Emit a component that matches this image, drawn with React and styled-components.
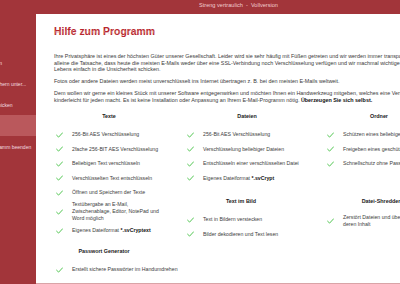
import styled, { createGlobalStyle } from "styled-components";

const GlobalStyle = createGlobalStyle`
  html, body {
    margin: 0;
    padding: 0;
    background-color: #a2353a;
    overflow: hidden;
  }
  body {
    font-family: "Liberation Sans", Arial, sans-serif;
  }
`;

const Page = styled.div`
  width: 400px;
  height: 284px;
  overflow: hidden;
  display: flex;
  flex-direction: column;
`;

const TopBar = styled.div`
  height: 14px;
  flex-shrink: 0;
  padding-left: 199px;
  font-size: 5.6px;
  line-height: 11px;
  color: #f1cdd0;
  white-space: nowrap;
`;

const Main = styled.div`
  display: flex;
  flex: 1;
  min-height: 0;
`;

const Sidebar = styled.nav`
  width: 36px;
  flex-shrink: 0;
  overflow: hidden;
  padding-top: 38px;
  box-sizing: border-box;
`;

const MenuItem = styled.div`
  height: 21px;
  display: flex;
  align-items: center;
  font-size: 5px;
  color: #f4dfe0;
  white-space: nowrap;
  background-color: ${(p) => (p.$active ? "#ba585c" : "transparent")};
`;

const MenuLabel = styled.span`
  margin-left: -13px;
`;

const Panel = styled.main`
  width: 540px;
  flex-shrink: 0;
  background-color: #ffffff;
  border-bottom: 1px solid #d9a4a7;
  padding: 12px 0 0 18px;
  box-sizing: border-box;
  overflow: hidden;
`;

const TitleBlock = styled.div`
  display: flex;
  flex-direction: column;
  align-items: flex-start;
  margin-bottom: 9px;
`;

const Title = styled.h1`
  margin: 0;
  font-size: 10.4px;
  line-height: 11px;
  font-weight: bold;
  color: #b8262d;
`;

const TitleMirror = styled.div`
  font-size: 10.4px;
  line-height: 11px;
  font-weight: bold;
  color: #d98a8e;
  transform: scaleY(-0.7);
  transform-origin: top;
  margin-top: -1px;
  height: 8px;
  -webkit-mask-image: linear-gradient(to bottom, transparent 20%, rgba(0, 0, 0, 0.8) 100%);
  mask-image: linear-gradient(to bottom, transparent 20%, rgba(0, 0, 0, 0.8) 100%);
`;

const Paragraph = styled.p`
  margin: 0 0 5.5px 0;
  font-size: 5.4px;
  line-height: 6.6px;
  color: #3a3a3a;
  white-space: nowrap;

  b {
    color: #111;
  }
`;

const Features = styled.div`
  display: grid;
  grid-template-columns: 132px 140px 140px;
  margin-top: 8px;
`;

const Column = styled.div`
  display: flex;
  flex-direction: column;
  gap: 10px;
`;

const Section = styled.div`
  display: flex;
  flex-direction: column;
  min-height: ${(p) => p.$minHeight || 0}px;
`;

const Heading = styled.div`
  width: ${(p) => p.$width || 110}px;
  height: 8px;
  line-height: 8px;
  text-align: center;
  font-size: 5.4px;
  font-weight: bold;
  color: #1a1a1a;
  white-space: nowrap;
  margin-bottom: 9px;
`;

const List = styled.div`
  display: flex;
  flex-direction: column;
  gap: 2.5px;
`;

const Item = styled.div`
  display: flex;
  align-items: center;
  gap: 9px;
  min-height: 12px;
  padding-left: ${(p) => p.$indent ?? 2}px;
  font-size: 5.2px;
  line-height: 7px;
  color: #3d3d3d;
  white-space: nowrap;

  b {
    color: #111;
  }
`;

const CheckMark = styled.svg`
  width: 7px;
  height: 6px;
  flex-shrink: 0;
`;

const Check = () => (
  <CheckMark viewBox="0 0 7 6">
    <path d="M0.6 3.2 L2.6 5.1 L6.6 0.8" fill="none" stroke="#3fbf3f" strokeWidth="0.9" strokeLinecap="round" strokeLinejoin="round" />
  </CheckMark>
);

const Feature = ({ children, indent }) => (
  <Item $indent={indent}>
    <Check />
    <span>{children}</span>
  </Item>
);

const menu = ["Öffnen", "Speichern unter...", "Abschicken", "Hilfe", "Programm beenden"];

export default function App() {
  return (
    <>
      <GlobalStyle />
      <Page>
        <TopBar>Streng vertraulich &nbsp;-&nbsp; Vollversion</TopBar>
        <Main>
          <Sidebar>
            {menu.map((label) => (
              <MenuItem key={label} $active={label === "Hilfe"}>
                <MenuLabel>{label}</MenuLabel>
              </MenuItem>
            ))}
          </Sidebar>
          <Panel>
            <TitleBlock>
              <Title>Hilfe zum Programm</Title>
              <TitleMirror aria-hidden="true">Hilfe zum Programm</TitleMirror>
            </TitleBlock>

            <Paragraph>
              Ihre Privatsphäre ist eines der höchsten Güter unserer Gesellschaft. Leider wird sie sehr häufig mit Füßen getreten und wir werden immer transparenter. Schon
              <br />
              alleine die Tatsache, dass heute die meisten E-Mails weder über eine SSL-Verbindung noch Verschlüsselung verfügen und wir machmal wichtige Daten unseres
              <br />
              Lebens einfach in die Unsicherheit schicken.
            </Paragraph>
            <Paragraph>
              Fotos oder andere Dateien werden meist unverschlüsselt ins Internet übertragen z. B. bei den meisten E-Mails weltweit.
            </Paragraph>
            <Paragraph>
              Dem wollen wir gerne ein kleines Stück mit unserer Software entgegenwirken und möchten Ihnen ein Handwerkzeug mitgeben, welches eine Verschlüsselung
              <br />
              kinderleicht für jeden macht. Es ist keine Installation oder Anpassung an Ihrem E-Mail-Programm nötig. <b>Überzeugen Sie sich selbst.</b>
            </Paragraph>

            <Features>
              <Column>
                <Section>
                  <Heading>Texte</Heading>
                  <List>
                    <Feature>256-Bit AES Verschlüsselung</Feature>
                    <Feature>2fache 256-BIT AES Verschlüsselung</Feature>
                    <Feature>Beliebigen Text verschlüsseln</Feature>
                    <Feature>Verschlüsselten Text entschlüsseln</Feature>
                    <Feature>Öffnen und Speichern der Texte</Feature>
                    <Feature>
                      Textübergabe an E-Mail,
                      <br />
                      Zwischenablage, Editor, NotePad und
                      <br />
                      Word möglich
                    </Feature>
                    <Feature>
                      Eigenes Dateiformat <b>*.svCryptext</b>
                    </Feature>
                  </List>
                </Section>
                <Section>
                  <Heading $width={100}>Passwort Generator</Heading>
                  <List>
                    <Feature>Erstellt sichere Passwörter im Handumdrehen</Feature>
                  </List>
                </Section>
              </Column>

              <Column>
                <Section $minHeight={75}>
                  <Heading $width={122}>Dateien</Heading>
                  <List>
                    <Feature indent={1}>256-Bit AES Verschlüsselung</Feature>
                    <Feature indent={1}>Verschlüsselung beliebiger Dateien</Feature>
                    <Feature indent={1}>Entschlüsseln einer verschlüsselten Datei</Feature>
                    <Feature indent={1}>
                      Eigenes Dateiformat <b>*.svCrypt</b>
                    </Feature>
                  </List>
                </Section>
                <Section>
                  <Heading>Text im Bild</Heading>
                  <List>
                    <Feature indent={1}>Text in Bildern verstecken</Feature>
                    <Feature indent={1}>Bilder dekodieren und Text lesen</Feature>
                  </List>
                </Section>
              </Column>

              <Column>
                <Section $minHeight={75}>
                  <Heading $width={106}>Ordner</Heading>
                  <List>
                    <Feature indent={1}>Schützen eines beliebigen Ordners</Feature>
                    <Feature indent={1}>Freigeben eines geschützten Ordners</Feature>
                    <Feature indent={1}>Schnellschutz ohne Passwort</Feature>
                  </List>
                </Section>
                <Section>
                  <Heading>Datei-Shredder</Heading>
                  <List>
                    <Feature indent={1}>
                      Zerstört Dateien und überschreibt
                      <br />
                      deren Inhalt
                    </Feature>
                  </List>
                </Section>
              </Column>
            </Features>
          </Panel>
        </Main>
      </Page>
    </>
  );
}
